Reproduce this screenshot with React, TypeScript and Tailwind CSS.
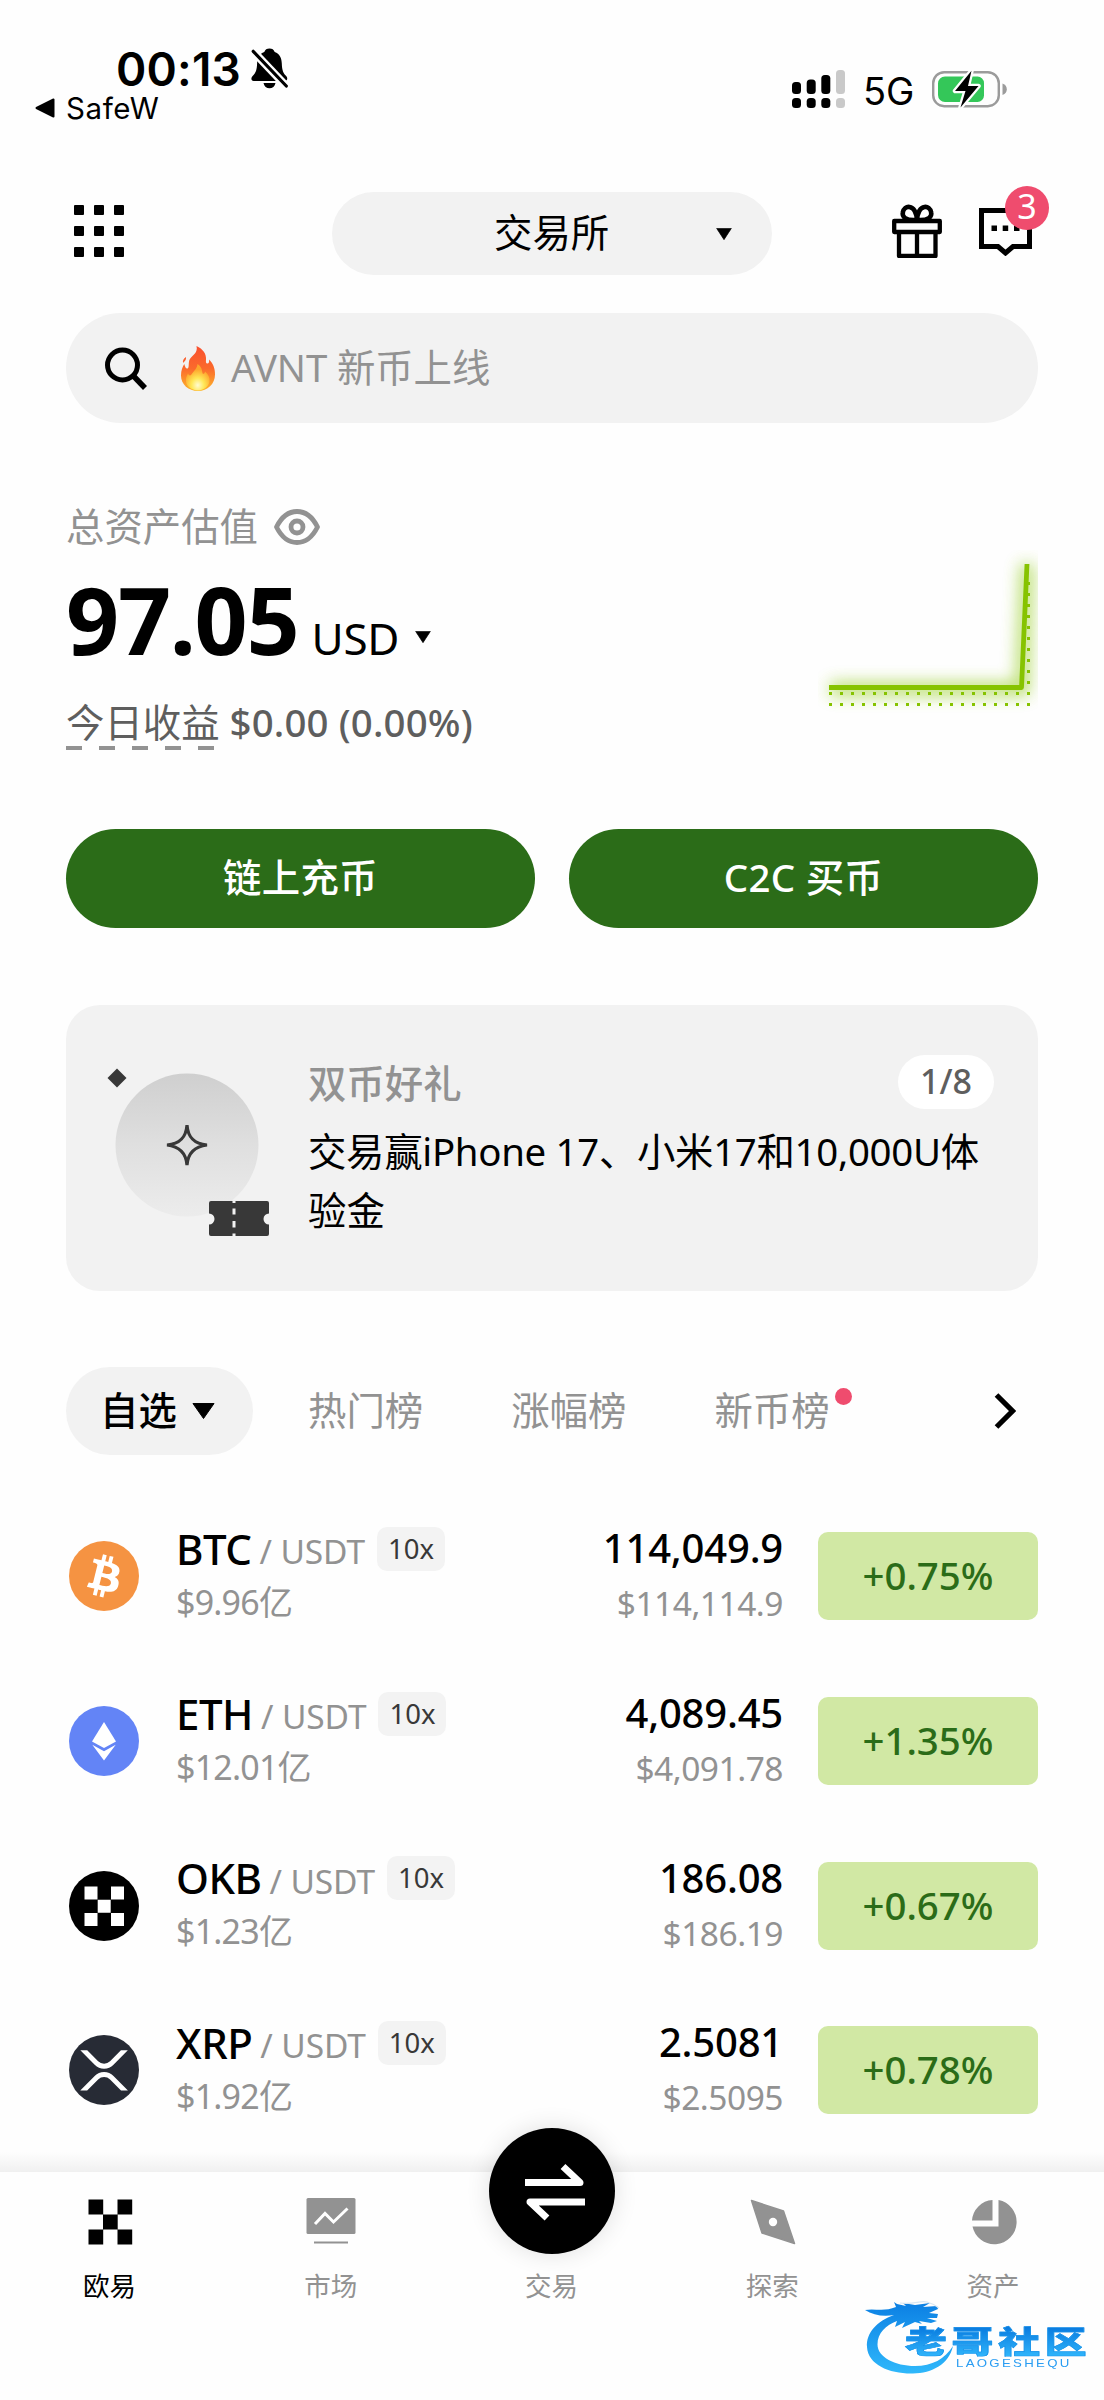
import type { ReactNode } from "react";

const LATIN = "font-['Noto_Sans','Noto_Sans_CJK_SC',sans-serif]";

function Caret({ className }: { className: string }) {
  return (
    <svg viewBox="0 0 24 16" preserveAspectRatio="none" className={className}>
      <path d="M1 0.5h22L12 15.5z" fill="#000" stroke="#000" strokeWidth="1" strokeLinejoin="round" />
    </svg>
  );
}

function StatusBar() {
  return (
    <div className="flex h-[192px] justify-between font-['Inter',sans-serif] text-black">
      <div className="flex flex-col pl-[35px] pt-[46px]">
        <div className="flex h-[45px] items-center pl-[81px]">
          <span className="w-[135px] whitespace-nowrap text-[46px] font-semibold leading-[46px] tracking-[0.200px]">00:13</span>
          <svg viewBox="0 0 37 41" className="h-[41px] w-[37px]">
            <path
              d="M18.500 0.500c2.600 0 4.400 1.200 5.200 3.400 5 1.800 7 6.200 7.100 11.600.2 7 1.600 10 4.400 12.500 1.800 1.800 1.300 4.900-1.600 4.900H2.700c-2.600 0-3-2.900-1.300-4.700 3.100-3 4.500-5.700 4.700-12.700C6.300 10 8.400 5.700 13.300 3.900c.8-2.200 2.600-3.400 5.200-3.400zM12.500 35h12c-.6 3.300-3.100 5.300-6 5.300s-5.400-2-6-5.300z"
              fill="#000"
            />
            <path d="M-1 0L37 40" stroke="#fefefe" strokeWidth="8" />
            <path d="M2.200 3.300L35.300 38" stroke="#000" strokeWidth="3.200" strokeLinecap="round" />
          </svg>
        </div>
        <div className="flex h-[34px] items-center">
          <svg viewBox="0 0 20 20" className="h-5 w-5">
            <path d="M18.500 1.500v17L1.500 10z" fill="#000" stroke="#000" strokeWidth="2" strokeLinejoin="round" />
          </svg>
          <span className="ml-[11px] text-[29.500px] leading-[34px] tracking-[0.600px]">SafeW</span>
        </div>
      </div>
      <div className="mt-[70px] flex h-[38px] items-center pr-[97px]">
        <svg viewBox="0 0 54 38" className="h-[38px] w-[54px]">
          <g fill="#000">
            <rect x="0" y="12" width="9" height="12" rx="3.500" />
            <rect x="14.700" y="9.500" width="9" height="14.500" rx="3.500" />
            <rect x="29.300" y="5" width="9" height="19" rx="3.500" />
            <rect x="0" y="28" width="9" height="10" rx="3.500" />
            <rect x="14.700" y="28" width="9" height="10" rx="3.500" />
            <rect x="29.300" y="28" width="9" height="10" rx="3.500" />
          </g>
          <g fill="#c9c9c9">
            <rect x="44" y="0" width="9" height="24" rx="3.500" />
            <rect x="44" y="28" width="9" height="10" rx="3.500" />
          </g>
        </svg>
        <span className="ml-[17px] mt-[4px] w-[69px] whitespace-nowrap text-[38px] leading-[38px]">5G</span>
        <svg viewBox="0 0 75 38" className="h-[38px] w-[75px]">
          <rect x="1.200" y="2.200" width="65.600" height="34" rx="11" fill="none" stroke="#9b9b9b" strokeWidth="2.400" />
          <path d="M70.500 13.500c3 .9 4.300 3.200 4.300 5.700s-1.300 4.800-4.300 5.700z" fill="#9b9b9b" />
          <path d="M13 6.500h32.500a6.500 6.500 0 0 1 6.500 6.500v12.500a6.500 6.500 0 0 1-6.500 6.500H13a7 7 0 0 1-7-7V13.500a7 7 0 0 1 7-7z" fill="#34c759" />
          <path
            d="M39.500 0.800L23 21h10.500L28.500 37.500 46.500 16H36z"
            fill="#000"
            stroke="#fefefe"
            strokeWidth="4.500"
            strokeLinejoin="round"
            paintOrder="stroke"
          />
        </svg>
      </div>
    </div>
  );
}

function TopBar() {
  return (
    <div className="flex h-[83px] items-center px-[66px]">
      <svg viewBox="0 0 50 52" className="mb-[5px] ml-[8px] h-[52px] w-[50px]">
        {[0, 21, 42].map((y) =>
          [0, 20, 40].map((x) => <rect key={`${x}-${y}`} x={x} y={y} width="10" height="10" rx="1" fill="#000" />)
        )}
      </svg>
      <div className="ml-[208px] flex h-[83px] w-[440px] items-center justify-end rounded-full bg-[#f2f2f2] pr-[40px]">
        <span className="mb-[4px] w-[222px] text-[38.400px] leading-[48px]">交易所</span>
        <Caret className="h-[12px] w-[16px]" />
      </div>
      <svg viewBox="0 0 50 54" className="mb-[6px] ml-[120px] h-[54px] w-[50px]" fill="none" stroke="#000" strokeWidth="4.300" strokeLinejoin="round">
        <rect x="2.200" y="17" width="45.600" height="11" />
        <path d="M7 28v24h36.500V28M25 28v24" />
        <path d="M25 16C13 17 10 12.500 10.800 8.500 11.500 4.500 14.500 2.500 17.500 3c4.500.8 7 6.500 7.500 13zM25 16c12 1 15-3.500 14.200-7.500C38.500 4.500 35.500 2.500 32.500 3c-4.500.8-7 6.500-7.500 13z" strokeWidth="4.600" />
      </svg>
      <div className="relative mb-[3px] ml-[37px] h-[48px] w-[53px]">
        <svg viewBox="0 0 53 48" className="h-[48px] w-[53px]">
          <path d="M2.500 2.500h48v36H34l-7.500 6.500-7.500-6.500H2.500z" fill="none" stroke="#000" strokeWidth="5" />
          <path d="M12.500 17.500h5.500v5.500h-5.500zM23.700 17.500h5.500v5.500h-5.500zM35 17.500h5.500v5.500H35z" fill="#000" />
        </svg>
        <span className="absolute left-[26px] top-[-22px] flex h-[44px] w-[44px] items-center justify-center rounded-full bg-[#ef4c6e] pb-[3px] text-[34px] leading-[41px] text-white">
          3
        </span>
      </div>
    </div>
  );
}

function Flame() {
  return (
    <svg viewBox="0 0 34 45" className="ml-[34px] h-[45px] w-[34px]">
      <defs>
        <linearGradient id="flame" x1="0" y1="0" x2="0" y2="1">
          <stop offset="0" stopColor="#f9502f" />
          <stop offset="0.500" stopColor="#fb6a2c" />
          <stop offset="1" stopColor="#fdb72b" />
        </linearGradient>
        <radialGradient id="core" cx="0.500" cy="0.800" r="0.600">
          <stop offset="0" stopColor="#fffbd0" />
          <stop offset="0.450" stopColor="#ffe756" />
          <stop offset="1" stopColor="#fda52c" />
        </radialGradient>
      </defs>
      <path
        d="M15.500 0c6.500 3 10 8 9.500 13.500-.1 2-.3 3.500 1 4 1.600.4 2.500-1.500 2-4C32 17 34 22.500 34 28.500 34 38 26.500 45 17 45S0 38.500 0 29.500c0-5 1.500-8.500 3.300-11.500C4 21 5 23 6.500 22.500c1.800-.6.800-4 1.700-8C9.300 10 17.500 8 15.500 0zM5 11c.3 2.500-.7 4-3 6C1.500 14.500 2.500 12.500 5 11z"
        fill="url(#flame)"
      />
      <path
        d="M16.500 18c4 2.500 4.500 6 5 9 .4 1.500 2.300 1 2.500-1.500 3.500 3 5 6 4.500 10C27.500 41 22.500 44.500 17 44.500S5.500 41 5 35.500C4.600 32.500 5.500 30 7 27.500c.8 2 2.200 2.500 3.200 1.200 1.800-2.700 6-6 6.300-10.700z"
        fill="url(#core)"
      />
    </svg>
  );
}

function SearchBar() {
  return (
    <div className="mx-[66px] mt-[38px] flex h-[110px] items-center rounded-full bg-[#f2f2f2] pl-[39px]">
      <svg viewBox="0 0 42 43" className="h-[43px] w-[42px]" fill="none" stroke="#000" strokeWidth="5">
        <circle cx="17.500" cy="18" r="15" />
        <path d="M28 28.500L40 41" strokeWidth="5.500" />
      </svg>
      <Flame />
      <span className="mb-[3px] ml-[16px] text-[38.400px] leading-[48px] tracking-[-0.100px] text-[#929292]">AVNT 新币上线</span>
    </div>
  );
}

function BalanceChart() {
  const xs = Array.from({ length: 19 }, (_, i) => i * 11 + 12);
  const ys = Array.from({ length: 11 }, (_, i) => i * 11 + 31);
  return (
    <svg viewBox="0 0 220 164" className="h-[164px] w-[220px]">
      <defs>
        <filter id="glow" x="-20%" y="-20%" width="140%" height="140%">
          <feGaussianBlur stdDeviation="8" />
        </filter>
      </defs>
      <path d="M12 139H204L209 14" fill="none" stroke="#9bd02f" strokeWidth="13" opacity="0.750" filter="url(#glow)" />
      <g fill="#86c300">
        {xs.map((x) => (
          <g key={x}>
            <rect x={x - 1} y="142" width="3" height="3" />
            <rect x={x - 1} y="153" width="3" height="3" />
          </g>
        ))}
        {ys.map((y) => (
          <rect key={y} x="209" y={y + 1} width="3" height="3" />
        ))}
      </g>
      <path d="M11 137.500H203.500L209 14" fill="none" stroke="#86c300" strokeWidth="4.800" strokeLinejoin="round" />
    </svg>
  );
}

function Balance() {
  return (
    <div className="mx-[66px] mt-[79px] flex h-[327px] justify-between">
      <div className="flex flex-col">
        <div className="flex h-[50px] items-center text-[#929292]">
          <span className="mb-[2px] text-[38.400px] leading-[50px]">总资产估值</span>
          <svg viewBox="0 0 46 36" className="ml-[16px] h-[36px] w-[46px]" fill="none" stroke="#929292" strokeWidth="4.800">
            <path d="M2.500 18C7.500 8 14.500 2.500 23 2.500S38.500 8 43.500 18C38.500 28 31.500 33.500 23 33.500S7.500 28 2.500 18z" strokeLinejoin="round" />
            <circle cx="23" cy="18" r="6" />
          </svg>
        </div>
        <div className="mt-[16px] flex h-[102px] items-baseline">
          <span className="text-[93px] font-bold leading-[102px] tracking-[-1.300px]">97.05</span>
          <span className="ml-[13px] text-[44px] leading-[50px] tracking-[-0.200px]">USD</span>
          <span className="ml-[16px] pb-[12px]">
            <Caret className="h-[12px] w-[16px]" />
          </span>
        </div>
        <div className="mt-[27px] flex h-[52px] text-[38.400px] leading-[50px] text-[#5e5e5e]">
          <div className="flex flex-col">
            <span className="h-[49px]">今日收益</span>
            <div className="flex gap-[17px]">
              {[0, 1, 2, 3, 4].map((i) => (
                <span key={i} className="h-[4px] w-[16px] bg-[#929292]" />
              ))}
            </div>
          </div>
          <span className="ml-[10px] font-medium tracking-[0.150px]">$0.00 (0.00%)</span>
        </div>
      </div>
      <div className="pt-[48px]">
        <BalanceChart />
      </div>
    </div>
  );
}

function Actions() {
  return (
    <div className="mx-[66px] grid h-[99px] grid-cols-2 gap-[34px]">
      {["链上充币", "C2C 买币"].map((t) => (
        <button key={t} className="h-[99px] rounded-[50px] bg-[#2b6c18] pb-[3px] text-[38.400px] font-medium leading-[50px] tracking-[0.300px] text-white">
          {t}
        </button>
      ))}
    </div>
  );
}

function PromoArt() {
  return (
    <svg viewBox="0 0 170 176" className="h-[176px] w-[170px]">
      <defs>
        <linearGradient id="disc" x1="0" y1="0" x2="0" y2="1">
          <stop offset="0" stopColor="#cfcfcf" />
          <stop offset="0.500" stopColor="#dfdfdf" />
          <stop offset="1" stopColor="#ececec" />
        </linearGradient>
      </defs>
      <circle cx="88" cy="85" r="71.500" fill="url(#disc)" />
      <path d="M18 8.500L27.500 18 18 27.500 8.500 18z" fill="#383838" />
      <path d="M88 65C89 78 95.500 84 108 85 95.500 86.500 89 92.500 88 105 87 92.500 80.500 86.500 68 85 80.500 84 87 78 88 65z" fill="none" stroke="#383838" strokeWidth="3.200" />
      <path d="M112 141h56q2 0 2 2v10.500a5.500 5.500 0 0 0 0 11V174q0 2-2 2h-56q-2 0-2-2v-9.500a5.500 5.500 0 0 0 0-11V143q0-2 2-2z" fill="#383838" />
      <path d="M135 141v2M135 148.500v6M135 161v6.500M135 173.500v3" stroke="#f2f2f2" strokeWidth="3" />
    </svg>
  );
}

function Promo() {
  return (
    <div className="mx-[66px] mt-[77px] flex h-[286px] rounded-[34px] bg-[#f2f2f2] pl-[33px] pt-[55px]">
      <PromoArt />
      <div className="ml-[39px] flex flex-1 flex-col pr-[44px]">
        <div className="flex h-[54px] items-center justify-between">
          <span className="pb-[9px] text-[38.400px] font-medium leading-[50px] text-[#929292]">双币好礼</span>
          <span className="mt-[-10px] flex h-[54px] w-[96px] items-center justify-center rounded-full bg-white pb-[2px] text-[34px] font-medium leading-[52px] text-[#5e5e5e]">
            1/8
          </span>
        </div>
        <p className="mt-[8px] whitespace-nowrap text-[38.400px] leading-[59px]">
          <span className="tracking-[-0.300px]">交易赢iPhone 17、小米17和10,000U体</span>
          <br />
          验金
        </p>
      </div>
    </div>
  );
}

function Tabs() {
  return (
    <div className="mx-[66px] mt-[76px] flex h-[88px] items-center text-[38.400px] leading-[50px] text-[#929292]">
      <div className="flex h-[88px] w-[187px] items-center rounded-full bg-[#f2f2f2] pl-[34px] text-black">
        <span className="mb-[2px] font-medium">自选</span>
        <Caret className="ml-[15px] h-[16px] w-[23px]" />
      </div>
      <span className="mb-[2px] ml-[55px]">热门榜</span>
      <span className="mb-[2px] ml-[88px]">涨幅榜</span>
      <span className="relative mb-[2px] ml-[88px]">
        新币榜
        <span className="absolute right-[-22px] top-[3px] h-[17px] w-[17px] rounded-full bg-[#ef4c6e]" />
      </span>
      <svg viewBox="0 0 22 36" className="ml-auto mr-[22px] h-[36px] w-[22px]" fill="none" stroke="#000" strokeWidth="5.200">
        <path d="M2.500 2L18.500 18 2.500 34" />
      </svg>
    </div>
  );
}

function Btc() {
  return (
    <svg viewBox="0 0 32 32" className="h-[70px] w-[70px]">
      <circle cx="16" cy="16" r="16" fill="#f59342" />
      <path
        fill="#fff"
        transform="translate(0.100 0.100) scale(0.990)"
        d="M23.189 14.020c.314-2.096-1.283-3.223-3.465-3.975l.708-2.840-1.728-.43-.69 2.765c-.454-.114-.92-.22-1.385-.326l.695-2.783L15.596 6l-.708 2.839c-.376-.086-.746-.17-1.104-.26l.002-.009-2.384-.595-.46 1.846s1.283.294 1.256.312c.7.175.826.638.805 1.006l-.806 3.235c.048.012.11.03.18.057l-.183-.045-1.130 4.532c-.086.212-.303.531-.793.41.018.025-1.256-.313-1.256-.313l-.858 1.978 2.250.561c.418.105.828.215 1.231.318l-.715 2.872 1.727.43.708-2.840c.472.127.93.245 1.378.357l-.706 2.828 1.728.43.715-2.866c2.948.558 5.164.333 6.097-2.333.752-2.146-.037-3.385-1.588-4.192 1.130-.26 1.980-1.003 2.207-2.538zm-3.950 5.538c-.533 2.147-4.148.986-5.320.695l.95-3.805c1.172.293 4.929.872 4.370 3.110zm.535-5.569c-.487 1.953-3.495.96-4.470.717l.86-3.450c.975.243 4.118.696 3.610 2.733z"
      />
    </svg>
  );
}

function Eth() {
  return (
    <svg viewBox="0 0 70 70" className="h-[70px] w-[70px]">
      <circle cx="35" cy="35" r="35" fill="#6384f6" />
      <path d="M35 16l12 19.500L35 42 23 35.500z" fill="#fff" />
      <path d="M23.300 38.800L35 45.200l11.700-6.400L35 54.500z" fill="#fff" />
    </svg>
  );
}

function Okb() {
  return (
    <svg viewBox="0 0 70 70" className="h-[70px] w-[70px]">
      <circle cx="35" cy="35" r="35" fill="#000" />
      <path d="M15.500 15.500h13v13h-13zM42 15.500h13v13H42zM28.700 28.700h13v13h-13zM15.500 42h13v13h-13zM42 42h13v13H42z" fill="#fff" />
    </svg>
  );
}

function Xrp() {
  return (
    <svg viewBox="0 0 32 32" className="h-[70px] w-[70px]">
      <circle cx="16" cy="16" r="16" fill="#272b35" />
      <path
        fill="#fff"
        transform="translate(-1.400 -1.900) scale(1.090 1.110)"
        d="M23.070 8h2.890l-6.015 5.957a5.621 5.621 0 01-7.890 0L6.035 8H8.930l4.570 4.523a3.556 3.556 0 004.996 0L23.070 8zM8.895 24.563H6l6.055-5.993a5.621 5.621 0 017.890 0L26 24.563h-2.895L18.500 20a3.556 3.556 0 00-4.996 0l-4.610 4.563z"
      />
    </svg>
  );
}

type Coin = { icon: ReactNode; name: string; vol: string; price: string; usd: string; change: string };

const coins: Coin[] = [
  { icon: <Btc />, name: "BTC", vol: "$9.96亿", price: "114,049.9", usd: "$114,114.9", change: "+0.75%" },
  { icon: <Eth />, name: "ETH", vol: "$12.01亿", price: "4,089.45", usd: "$4,091.78", change: "+1.35%" },
  { icon: <Okb />, name: "OKB", vol: "$1.23亿", price: "186.08", usd: "$186.19", change: "+0.67%" },
  { icon: <Xrp />, name: "XRP", vol: "$1.92亿", price: "2.5081", usd: "$2.5095", change: "+0.78%" },
];

function CoinRow({ coin }: { coin: Coin }) {
  return (
    <div className="flex h-[164.700px] items-center pl-[69px] pr-[66px]">
      {coin.icon}
      <div className="ml-[37px] flex flex-1 flex-col pb-[3px]">
        <div className="flex h-[50px] items-center">
          <span className="text-[42px] font-medium leading-[50px] tracking-[-0.500px]">{coin.name}</span>
          <span className="ml-[8px] mt-[6px] text-[33.500px] leading-[43px] tracking-[-0.100px] text-[#929292]">/ USDT</span>
          <span className="ml-[12px] flex h-[44px] w-[68px] items-center justify-center rounded-[10px] bg-[#f3f3f3] pb-[1px] text-[27.500px] leading-[43px] text-[#383838]">
            10x
          </span>
        </div>
        <span className="mt-[4px] text-[34px] leading-[48px] tracking-[-0.800px] text-[#929292]">{coin.vol}</span>
      </div>
      <div className="flex flex-col items-end pb-[3px]">
        <span className="text-[40px] font-medium leading-[50px] tracking-[-0.200px]">{coin.price}</span>
        <span className="mt-[7px] text-[33.500px] leading-[46px] tracking-[-0.500px] text-[#929292]">{coin.usd}</span>
      </div>
      <div className="ml-[35px] flex h-[88px] w-[220px] items-center justify-center rounded-[10px] bg-[#d1e8a4] pb-[2px] text-[38.400px] font-medium leading-[50px] text-[#2b6c18]">
        {coin.change}
      </div>
    </div>
  );
}

function NavItem({ label, active, children }: { label: string; active?: boolean; children: ReactNode }) {
  return (
    <div className="flex flex-1 flex-col items-center pt-[24px]">
      <div className="flex h-[52px] items-center justify-center">{children}</div>
      <span
        className={
          active
            ? "mt-[20px] pr-[2px] text-[26.500px] leading-[36px] text-black"
            : "mt-[20px] pr-[1px] text-[26.500px] leading-[36px] text-[#929292]"
        }
      >
        {label}
      </span>
    </div>
  );
}

function BottomNav() {
  return (
    <div className="relative flex h-[228px] bg-[#fefefe]">
      <div className="absolute left-0 top-[-20px] h-[20px] w-full bg-gradient-to-b from-transparent to-[#f0f0f0]" />
      <NavItem label="欧易" active>
        <svg viewBox="0 0 45 46" className="h-[46px] w-[45px]">
          <path d="M0.500 0.500h14.700v15H0.500zM29.500 0.500h14.700v15H29.500zM15 15.500h14.700v15H15zM0.500 30.500h14.700v15H0.500zM29.500 30.500h14.700v15H29.500z" fill="#000" />
        </svg>
      </NavItem>
      <NavItem label="市场">
        <svg viewBox="0 0 50 48" className="h-[48px] w-[50px]">
          <rect x="0.500" y="0" width="49" height="36" rx="1.500" fill="#929292" />
          <path d="M9 26L19 15.500 27.500 24 41.500 10.500" fill="none" stroke="#fff" strokeWidth="3" />
          <path d="M8 44.500h34" stroke="#929292" strokeWidth="2" />
        </svg>
      </NavItem>
      <NavItem label="交易">
        <div className="relative mt-[-63px] h-[126px] w-[126px] rounded-full bg-black shadow-[0_0_24px_rgba(0,0,0,0.12)]">
          <svg viewBox="0 0 126 126" className="h-[126px] w-[126px]" fill="none" stroke="#fff" strokeWidth="7" strokeLinejoin="round">
            <path d="M36 54.500H91L74 38.500M96 74H41L58 90" />
          </svg>
        </div>
      </NavItem>
      <NavItem label="探索">
        <svg viewBox="0 0 46 46" className="h-[46px] w-[46px]">
          <path d="M1.500 1.500L33.500 12 44.500 44.500 12 34z" fill="#929292" stroke="#929292" strokeWidth="1.500" strokeLinejoin="round" />
          <circle cx="23" cy="23" r="4.200" fill="#fefefe" />
        </svg>
      </NavItem>
      <NavItem label="资产">
        <svg viewBox="0 0 46 46" className="h-[46px] w-[46px]">
          <path d="M21.500 1A22 22 0 0 0 1 21.500H21.500zM27.500 1A22.300 22.300 0 1 1 1.500 27.500H27.500z" fill="#929292" />
        </svg>
      </NavItem>
      <Watermark />
    </div>
  );
}

function Watermark() {
  return (
    <div className="absolute bottom-[20px] right-[10px] h-[80px] w-[230px]">
      <svg viewBox="0 0 230 80" className="absolute left-0 top-0 h-[80px] w-[230px]">
        <defs>
          <linearGradient id="dragon" x1="0" y1="0" x2="0" y2="1">
            <stop offset="0" stopColor="#0b7fe3" />
            <stop offset="1" stopColor="#2fb8fb" />
          </linearGradient>
        </defs>
        <path
          d="M30 15C13 21 2 33 3 47c1 18 23 27 46 26.500 19-.4 36-9 40-27.500-8 13-21 20-38 20C31 66 13.500 57 13.500 44.500 13.500 33 22 25 33 21l-2 6 10-5-3 6 13-6 7 2-3-3 12 2 6-2-10-3 10 0 1-4-9-1 9-4-1-3-14 1 7-4-15 2-12-2 3 3-9-2-3-2 2 5C20 12 10 8 1 10c8 5 18 7 29 5z"
          fill="url(#dragon)"
        />
        <path d="M36 3C50 5 56 0 63 2s8 3 12 6" fill="none" stroke="#d7e6f2" strokeWidth="1.200" />
      </svg>
      <span className="absolute left-[41px] top-[26px] origin-left scale-x-[1.350] whitespace-nowrap bg-gradient-to-b from-[#0878de] to-[#2fb4fa] bg-clip-text text-[31px] font-black leading-[30px] tracking-[3.500px] text-transparent [-webkit-text-stroke:0.600px_#1a94ea]">
        老哥社区
      </span>
      <span className="absolute left-[92px] top-[58px] origin-left scale-x-[1.150] whitespace-nowrap font-['Liberation_Sans',sans-serif] text-[11.500px] leading-[11px] tracking-[2px] text-[#2a9df2]">
        LAOGESHEQU
      </span>
    </div>
  );
}

export default function App() {
  return (
    <div className={`flex h-[2400px] w-[1104px] flex-col overflow-hidden bg-[#fefefe] text-black ${LATIN}`}>
      <StatusBar />
      <TopBar />
      <SearchBar />
      <Balance />
      <Actions />
      <Promo />
      <Tabs />
      <div className="flex h-[717px] flex-col pt-[39px]">
        {coins.map((c) => (
          <CoinRow key={c.name} coin={c} />
        ))}
      </div>
      <BottomNav />
    </div>
  );
}
